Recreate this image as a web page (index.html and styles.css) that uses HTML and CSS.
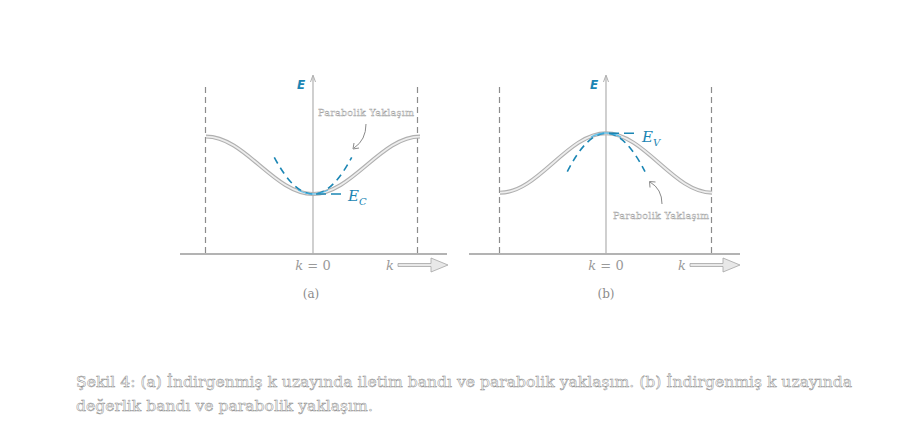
FILE: index.html
```html
<!DOCTYPE html>
<html lang="tr">
<head>
<meta charset="utf-8">
<title>Şekil 4</title>
<link rel="stylesheet" href="styles.css">
</head>
<body>
<main class="page">
  <div class="figures">
    <svg class="panel" width="290" height="230" viewBox="0 0 290 230">
      <line class="axis" x1="10" y1="184" x2="277" y2="184"/>
      <line class="zone" x1="35.5" y1="17" x2="35.5" y2="184"/>
      <line class="zone" x1="247.5" y1="17" x2="247.5" y2="184"/>
      <line class="axis thin" x1="143" y1="6" x2="143" y2="184"/>
      <polyline class="tip" points="140.5,12 143,5 145.5,12"/>
      <text class="lbl-e" x="131" y="19" text-anchor="middle">E</text>
      <path class="band-out" d="M 36 66.6 C 75 66.6 104.1 124 143 124 C 181.9 124 211 66.6 250 66.6"/>
      <path class="band-in" d="M 36 66.6 C 75 66.6 104.1 124 143 124 C 181.9 124 211 66.6 250 66.6"/>
      <path class="para" d="M 104.3 87.3 Q 143 160.7 181.7 87.3"/>
      <path class="para-glow" d="M 128 120 Q 143 128 158 120"/>
      <line class="para-line" x1="146" y1="124" x2="174" y2="124"/>
      <text class="lbl-band" x="178" y="131">E<tspan class="sub" dy="4">C</tspan></text>
      <text class="note" x="148" y="46" textLength="96">Parabolik Yaklaşım</text>
      <path class="pointer" d="M 196 54 Q 196 70 184 78"/>
      <polyline class="pointer" points="184,73 183,79 189,78"/>
      <text class="klabel" x="143" y="200" text-anchor="middle"><tspan class="ital">k</tspan> = 0</text>
      <text class="klabel" x="216" y="200"><tspan class="ital">k</tspan></text>
      <path class="karrow" d="M 228 193.5 L 261 193.5 L 261 188 L 278 195 L 261 202 L 261 196.5 L 228 196.5 Z"/>
      <text class="cap" x="141" y="228" text-anchor="middle">(a)</text>
    </svg>
    <svg class="panel" width="290" height="230" viewBox="0 0 290 230">
      <line class="axis" x1="7" y1="184" x2="278" y2="184"/>
      <line class="zone" x1="37.5" y1="17" x2="37.5" y2="184"/>
      <line class="zone" x1="249.5" y1="17" x2="249.5" y2="184"/>
      <line class="axis thin" x1="144" y1="6" x2="144" y2="184"/>
      <polyline class="tip" points="141.5,12 144,5 146.5,12"/>
      <text class="lbl-e" x="132" y="19" text-anchor="middle">E</text>
      <path class="band-out" d="M 38 122.7 C 76.5 122.7 105.5 63.3 144 63.3 C 182.5 63.3 211.5 122.7 250 122.7"/>
      <path class="band-in" d="M 38 122.7 C 76.5 122.7 105.5 63.3 144 63.3 C 182.5 63.3 211.5 122.7 250 122.7"/>
      <path class="para" d="M 105.3 101.7 Q 144 24.9 183 101.7"/>
      <path class="para-glow" d="M 129 67 Q 144 59 159 67"/>
      <line class="para-line" x1="147" y1="63.3" x2="176" y2="63.3"/>
      <text class="lbl-band" x="180" y="72">E<tspan class="sub" dy="4">V</tspan></text>
      <text class="note" x="151" y="149" textLength="96">Parabolik Yaklaşım</text>
      <path class="pointer" d="M 200 134 Q 200 119 188 112"/>
      <polyline class="pointer" points="188,117.5 187.5,111.5 193.5,112"/>
      <text class="klabel" x="144" y="200" text-anchor="middle"><tspan class="ital">k</tspan> = 0</text>
      <text class="klabel" x="216" y="200"><tspan class="ital">k</tspan></text>
      <path class="karrow" d="M 228 193.5 L 261 193.5 L 261 188 L 278 195 L 261 202 L 261 196.5 L 228 196.5 Z"/>
      <text class="cap" x="144" y="228" text-anchor="middle">(b)</text>
    </svg>
  </div>
  <p class="caption">Şekil 4: (a) İndirgenmiş k uzayında iletim bandı ve parabolik yaklaşım. (b) İndirgenmiş k uzayında değerlik bandı ve parabolik yaklaşım.</p>
</main>
</body>
</html>
```
FILE: styles.css
```css
html, body {
  margin: 0;
  padding: 0;
  background: #ffffff;
}

.page {
  width: 914px;
  height: 442px;
  overflow: hidden;
}

.figures {
  display: flex;
  gap: 2px;
  padding: 70px 0 0 170px;
}

.panel {
  display: block;
  overflow: visible;
}

.axis {
  stroke: #9a9a9a;
  stroke-width: 1.6;
}

.axis.thin {
  stroke: #b0b0b0;
  stroke-width: 1.2;
}

.tip {
  fill: none;
  stroke: #b0b0b0;
  stroke-width: 1;
}

.zone {
  stroke: #8c8c8c;
  stroke-width: 1.2;
  stroke-dasharray: 6 4;
}

.band-out {
  fill: none;
  stroke: #b0b0b0;
  stroke-width: 4;
}

.band-in {
  fill: none;
  stroke: #ededed;
  stroke-width: 1.8;
}

.para {
  fill: none;
  stroke: #1b86b4;
  stroke-width: 1.6;
  stroke-dasharray: 7 5;
}

.para-glow {
  fill: none;
  stroke: #45b6e8;
  stroke-width: 1.4;
  opacity: 0.8;
}

.para-line {
  stroke: #1b86b4;
  stroke-width: 1.6;
  stroke-dasharray: 10 5;
}

.lbl-e {
  font-family: "DejaVu Sans", sans-serif;
  font-style: italic;
  font-weight: bold;
  font-size: 12px;
  fill: #1b86b4;
}

.lbl-band {
  font-family: "DejaVu Serif", serif;
  font-style: italic;
  font-size: 15px;
  fill: #1b86b4;
}

.lbl-band .sub {
  font-size: 10px;
}

.note {
  font-family: "DejaVu Serif", serif;
  font-size: 9.5px;
  fill: #ffffff;
  stroke: #a0a0a0;
  stroke-width: 0.4;
}

.pointer {
  fill: none;
  stroke: #8a8a8a;
  stroke-width: 1;
}

.klabel {
  font-family: "DejaVu Serif", serif;
  font-size: 13px;
  fill: #9a9a9a;
}

.klabel .ital {
  font-style: italic;
}

.karrow {
  fill: #e8e8e8;
  stroke: #a4a4a4;
  stroke-width: 0.8;
}

.cap {
  font-family: "DejaVu Serif", serif;
  font-size: 12px;
  fill: #8c8c8c;
}

.caption {
  margin: 70px 0 0 76px;
  width: 800px;
  font-family: "DejaVu Serif", serif;
  font-size: 15.6px;
  line-height: 24px;
  color: #ffffff;
  -webkit-text-stroke: 0.5px #909090;
}
```
